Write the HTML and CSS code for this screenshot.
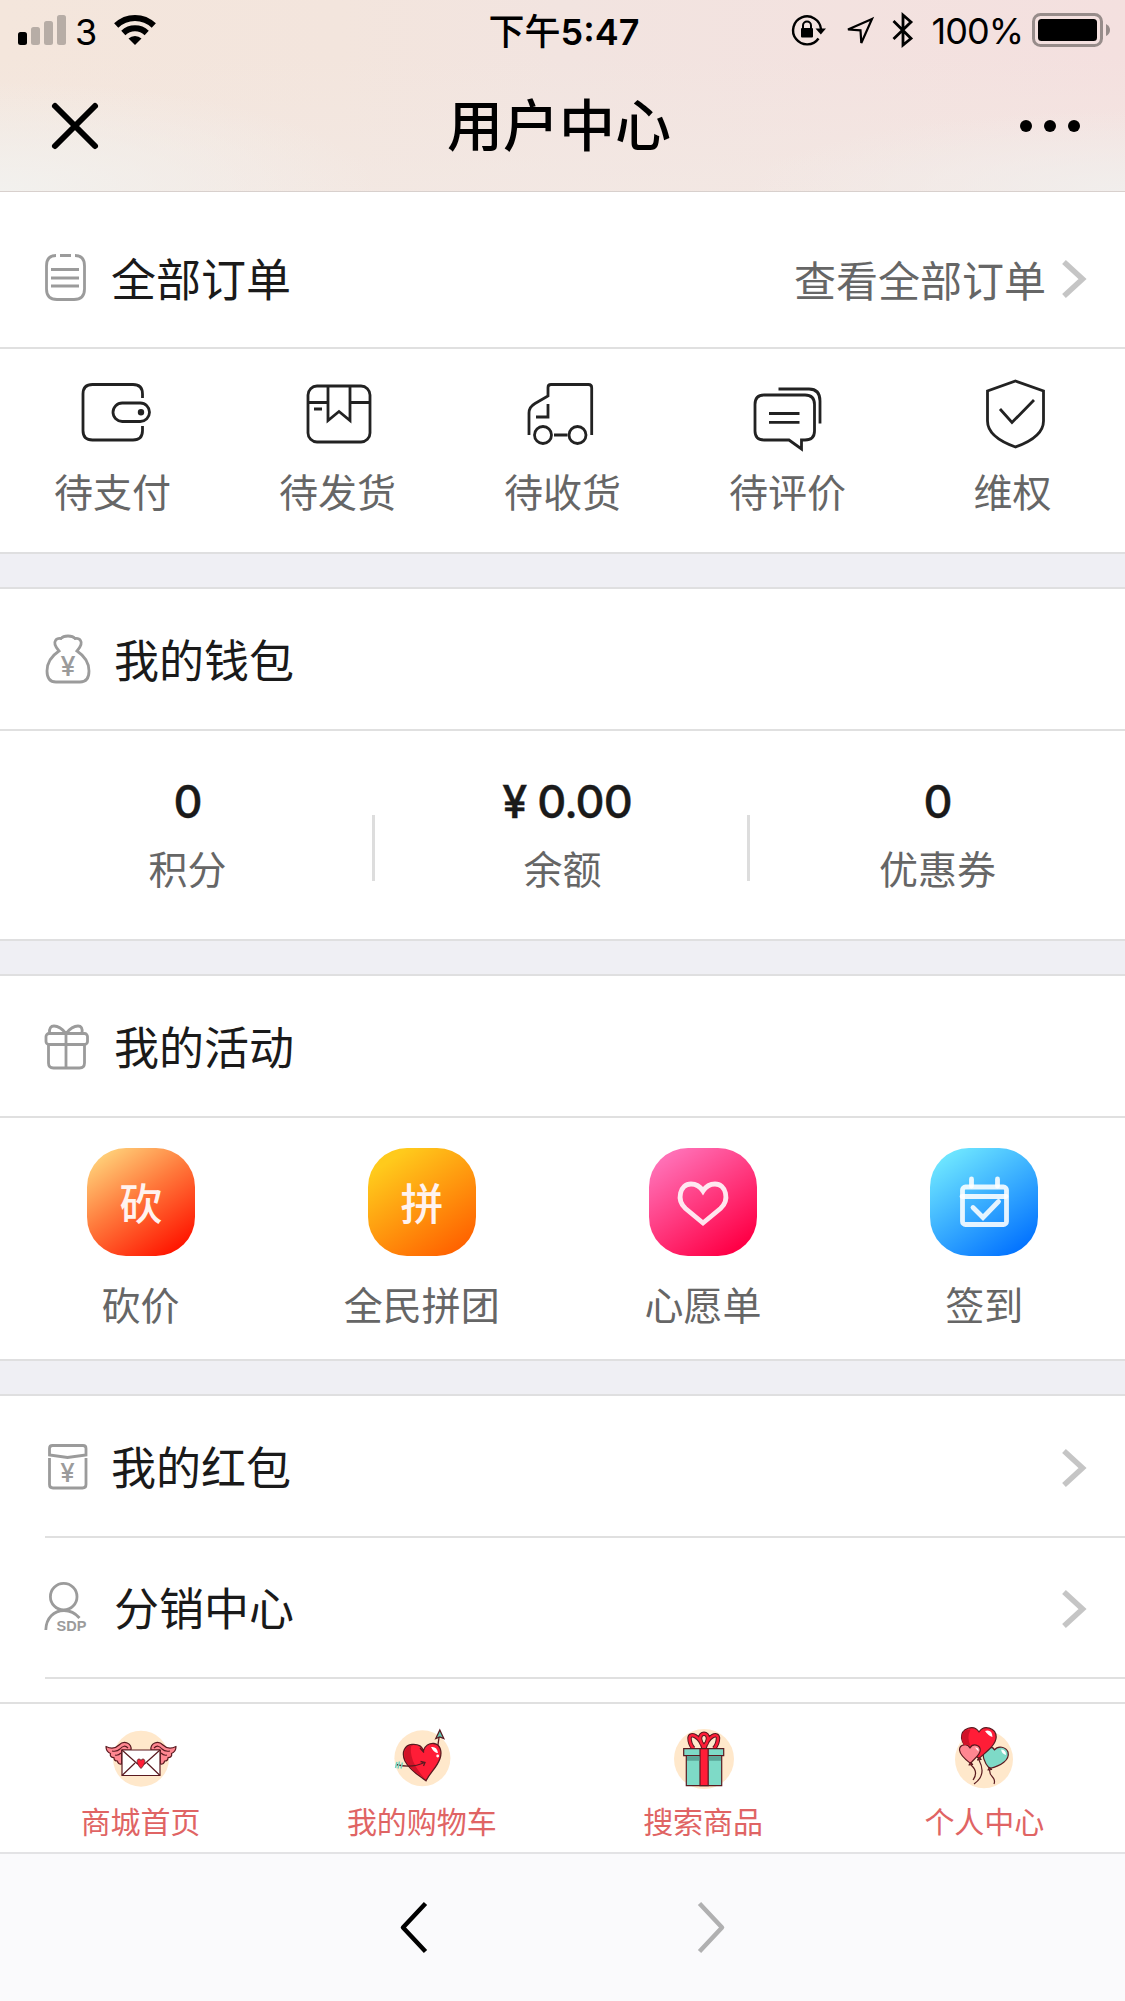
FILE: index.html
```html
<!DOCTYPE html>
<html lang="zh-CN">
<head>
    <meta charset="UTF-8">
    <meta name="viewport" content="width=device-width, initial-scale=1.0">
    <title>用户中心</title>
    <link rel="stylesheet" href="styles.css">
</head>
<body>
<div class="screen">

    <header class="top">
        <div class="status">
            <div class="status-left">
                <svg width="48" height="30" viewBox="0 0 48 30">
                    <rect x="0" y="17" width="9" height="13" rx="2.5"/>
                    <g fill="#b7ada6">
                        <rect x="13" y="12" width="9" height="18" rx="2.5"/>
                        <rect x="26" y="6" width="9" height="24" rx="2.5"/>
                        <rect x="39" y="0" width="9" height="30" rx="2.5"/>
                    </g>
                </svg>
                <span class="carrier">3</span>
                <svg class="wifi" width="42" height="30" viewBox="0 0 42 30">
                    <g fill="none" stroke="#000" stroke-width="6">
                        <path d="M2.2 10.5a27 27 0 0 1 37.6 0"/>
                        <path d="M9.3 18a17 17 0 0 1 23.4 0"/>
                    </g>
                    <path d="M21 30l-6.5-6.5a9.5 9.5 0 0 1 13 0z"/>
                </svg>
            </div>
            <span class="time">下午<b>5:47</b></span>
            <div class="status-right">
                <svg width="34" height="32" viewBox="0 0 34 32">
                    <path d="M26.5 24.5A14 14 0 1 1 29 15" fill="none" stroke="#000" stroke-width="2.4"/>
                    <path d="M23.5 14.500h10.500l-5.200 6z"/>
                    <rect x="9" y="14" width="12" height="9.500" rx="1"/>
                    <path d="M11 15v-3.500a4 4 0 0 1 8 0V15" fill="none" stroke="#000" stroke-width="2"/>
                </svg>
                <svg class="locate" width="30" height="31" viewBox="0 0 30 31">
                    <path d="M27 3L3 13.500l12.500.8.8 12.700z" fill="none" stroke="#000" stroke-width="2.200"/>
                </svg>
                <svg class="bluetooth" width="22" height="36" viewBox="0 0 22 36">
                    <path d="M1.500 9L19 26.500 11 33V3l8 7L1.500 27" fill="none" stroke="#000" stroke-width="2.800"/>
                </svg>
                <span class="percent">100%</span>
                <svg width="78" height="34" viewBox="0 0 78 34">
                    <rect x="1.500" y="1.500" width="68" height="31" rx="7" fill="none" stroke="#978c8a" stroke-width="3"/>
                    <rect x="6" y="6" width="59" height="22" rx="3.500"/>
                    <path d="M74 11q4 2 4 6t-4 6z" fill="#978c8a"/>
                </svg>
            </div>
        </div>
        <div class="navbar">
            <svg width="46" height="46" viewBox="0 0 46 46">
                <path d="M3 3l40 40M43 3L3 43" stroke="#000" stroke-width="6" stroke-linecap="round"/>
            </svg>
            <h1>用户中心</h1>
            <svg width="60" height="12" viewBox="0 0 60 12">
                <circle cx="6" cy="6" r="6"/><circle cx="30" cy="6" r="6"/><circle cx="54" cy="6" r="6"/>
            </svg>
        </div>
    </header>

    <main class="content">
        <section class="card first">
            <div class="row orders-head">
                <svg class="row-icon" viewBox="0 0 48 50">
                    <path d="M11 .5C5 .5 1.500 4 1.500 11v23c0 7 3.500 10.500 10.500 10.500h17c7 0 10.500-3.500 10.500-10.500V11C39.500 4 36 .5 30 .5M15 .5h11"/>
                    <path d="M6 14.500h28M6 23h28M6 31h28"/>
                </svg>
                <span class="label">全部订单</span>
                <span class="more">查看全部订单</span>
                <svg class="arrow" viewBox="0 0 24 38"><path d="M2 2l18.500 17L2 36"/></svg>
            </div>
            <div class="orders">
                <div class="order">
                    <svg viewBox="0 0 75 75">
                        <path d="M67.500 23v-4q0-9.500-9.500-9.500H17.500Q8 9.500 8 19v36.500q0 9.500 9.500 9.500H58q9.500 0 9.500-9.500V51"/>
                        <rect x="38" y="28" width="36.500" height="18.500" rx="9.200"/>
                        <circle cx="66" cy="37.300" r="1.800" fill="#222"/>
                    </svg>
                    <span>待支付</span>
                </div>
                <div class="order">
                    <svg viewBox="0 0 75 75">
                        <rect x="8" y="11" width="62" height="56" rx="9"/>
                        <path d="M8 27.500h20M50 27.500h20M14 34h8M28 11v34.500l11-9 11 9V11"/>
                    </svg>
                    <span>待发货</span>
                </div>
                <div class="order">
                    <svg viewBox="0 0 75 75">
                        <path d="M4 60V38q0-6 6-9.500L23 21V12.500Q23 9.500 26 9.500h37.500q3.200 0 3.200 3.200V60M23 29v13H11M29 60h13.500"/>
                        <circle cx="18" cy="60" r="8.500"/>
                        <circle cx="52.500" cy="60" r="8.500"/>
                    </svg>
                    <span>待收货</span>
                </div>
                <div class="order">
                    <svg viewBox="0 0 75 75">
                        <path d="M14 20h41q9.500 0 9.500 9.500V56q0 9-9.500 9H51.500v9L39 65H14q-9 0-9-9V29.500Q5 20 14 20z"/>
                        <path d="M28.500 14H59q11 0 11 12v22.500M19 38.500h30.500M19 47.300h30.500"/>
                    </svg>
                    <span>待评价</span>
                </div>
                <div class="order">
                    <svg viewBox="0 0 75 75">
                        <path d="M40.500 6L68.500 16v30q0 16-28 26-28-10-28-26V16z"/>
                        <path d="M25 34l12 13.500L59 25"/>
                    </svg>
                    <span>维权</span>
                </div>
            </div>
        </section>

        <section class="card">
            <div class="row">
                <svg class="row-icon" viewBox="0 0 48 50">
                    <path d="M14 17q-6-7-3.500-10.500Q12 4 16 4.500q2-2.500 7-2.500t7 2.500q4-.5 5.500 2Q38 10 32 17q12 8 12 20 0 11-9 11H11Q2 48 2 37q0-12 12-20z"/>
                    <text x="23" y="42" font-size="27">¥</text>
                </svg>
                <span class="label wide">我的钱包</span>
            </div>
            <div class="stats">
                <div class="stat"><b>0</b><span>积分</span></div>
                <div class="stat"><b class="money">¥ 0.00</b><span>余额</span></div>
                <div class="stat"><b>0</b><span>优惠券</span></div>
            </div>
        </section>

        <section class="card">
            <div class="row">
                <svg class="row-icon" viewBox="0 0 48 50">
                    <rect x="1" y="12.500" width="41.500" height="11" rx="3"/>
                    <path d="M3.500 23.500V42q0 5 5 5h26q5 0 5-5V23.500M21 12.500V47"/>
                    <path d="M21 12.500Q15 5 9 5 4 5 4.500 12M21 12.500Q27 5 33 5q5 0 4 7"/>
                </svg>
                <span class="label wide">我的活动</span>
            </div>
            <div class="games">
                <div class="game">
                    <div class="tile cut">砍</div>
                    <span>砍价</span>
                </div>
                <div class="game">
                    <div class="tile group">拼</div>
                    <span>全民拼团</span>
                </div>
                <div class="game">
                    <div class="tile wish">
                        <svg viewBox="0 0 108 108"><path d="M54 75L36.500 60.500C27 52 31 36 42 36q7.500 0 12 7 4.500-7 12-7c11 0 15 16 5.500 24.500z"/></svg>
                    </div>
                    <span>心愿单</span>
                </div>
                <div class="game">
                    <div class="tile sign">
                        <svg viewBox="0 0 108 108">
                            <rect x="32.500" y="39" width="44" height="37.500" rx="3"/>
                            <path d="M32 48.500h44M41.500 38v-7M67.500 38v-7M43 59.500l10 10 15.500-16"/>
                        </svg>
                    </div>
                    <span>签到</span>
                </div>
            </div>
        </section>

        <section class="card list">
            <div class="row">
                <svg class="row-icon" viewBox="0 0 48 50">
                    <path d="M4.500 14V7.500q0-3 3-3h30.500q3 0 3 3V14L22.500 16.500zM4.500 17v26.500q0 3.500 3.500 3.500h29.500q3.500 0 3.500-3.500V17"/>
                    <text x="22.500" y="41" font-size="26">¥</text>
                </svg>
                <span class="label">我的红包</span>
                <svg class="arrow" viewBox="0 0 24 38"><path d="M2 2l18.500 17L2 36"/></svg>
            </div>
            <div class="row short">
                <svg class="row-icon" viewBox="0 0 48 50">
                    <circle cx="18.700" cy="13.700" r="13.300"/>
                    <path d="M.8 47C1 35 9 27.500 19 27.500q9 0 15.500 7.500"/>
                    <text class="sdp" x="26.500" y="47.500" font-size="14.500">SDP</text>
                </svg>
                <span class="label wide">分销中心</span>
                <svg class="arrow" viewBox="0 0 24 38"><path d="M2 2l18.500 17L2 36"/></svg>
            </div>
        </section>
    </main>

    <nav class="tabs">
        <a class="tab">
            <!-- winged envelope -->
            <svg viewBox="0 0 90 66">
                <circle cx="45" cy="36.700" r="28" fill="#ffe8cb"/>
                <g stroke="#5a1a20" stroke-width="1.200" stroke-linejoin="round">
                    <g id="wing" fill="#ff8791">
                        <path d="M35 28c1-7-7-10-12-5-3 3-8 4-13 1.500 0 4 2 6 4.500 7-1 2.500 1 4 3.500 4.200 0 2 1.500 3.300 3.500 3.300 0 2 2 3.500 4.200 3V28z"/>
                        <path d="M32 26q-4-4-8 1-3 3-8 2M25 31q-3 3-6 2" fill="none"/>
                    </g>
                    <use href="#wing" transform="matrix(-1 0 0 1 90 0)"/>
                    <rect x="26" y="28" width="38" height="25.500" fill="#fff"/>
                    <path d="M26 53.500L39 41M64 53.500L51 41M26 28l15 13.500q4 3 8 0L64 28" fill="none"/>
                    <path d="M45 46.500c-5-5-4.500-9.500-2-9.500q1.500 0 2 1.500.5-1.500 2-1.500c2.500 0 3 4.500-2 9.500z" fill="#ff1d37" stroke-width=".8"/>
                </g>
            </svg>
            <span>商城首页</span>
        </a>
        <a class="tab">
            <!-- heart with an arrow through it -->
            <svg viewBox="0 0 90 66">
                <circle cx="45.400" cy="36.300" r="28" fill="#ffe8cb"/>
                <g stroke="#5a1a20" stroke-width="1.300" fill="none">
                    <path d="M60.500 26l2-14"/>
                    <path d="M62.800 8l4 8.500-4-1.500-4 1.500z" fill="#5fc9b4"/>
                    <path d="M49 58.800C43 54 33 49 28 39c-4-9 0-16 7-16.500 6-.5 10 2 11.500 6C48 24 52 21 57 21.500c7 1 8 9 6 15-3 9-10 14-14 22.300z" fill="#ff1d37"/>
                </g>
                <path d="M48 57C42 52 33 48 28.700 38.500 25.500 30 29 24 34.500 23q-2 6 1.500 16 4 9 12 18z" fill="#d01328"/>
                <path d="M54 25q6-1 7 6-4 0-7-6z" fill="#fff"/>
                <circle cx="60.700" cy="34" r="1.400" fill="#fff"/>
                <path d="M19 42.500q16 4 28.500-2M43.500 39.500l4.500 1-1.500 3.500M43 26l4 4.500" stroke="#5a1a20" stroke-width="1.300" fill="none"/>
                <path d="M20 40l-1.500 6M22.500 39.500l-1.500 7M25.500 40.500l-1.500 6" stroke="#73d3c0" stroke-width="1.500"/>
            </svg>
            <span>我的购物车</span>
        </a>
        <a class="tab">
            <!-- gift box -->
            <svg viewBox="0 0 90 66">
                <circle cx="46" cy="37" r="30" fill="#ffe8cb"/>
                <g fill="none" stroke="#5a1a20" stroke-width="4.500">
                    <path d="M45.500 26C42 14 32 10 31.500 16q0 6 4 10.500M46.500 26C50 14 59.500 10 60 16q0 6-4 10.500M42 17c0-7 8-7 8 0q-.5 4-4 8-3.500-4-4-8z"/>
                    <path d="M45.500 26C42 14 32 10 31.500 16q0 6 4 10.500M46.500 26C50 14 59.500 10 60 16q0 6-4 10.500M42 17c0-7 8-7 8 0q-.5 4-4 8-3.500-4-4-8z" stroke="#ff1d37" stroke-width="2.500"/>
                </g>
                <g stroke="#5a1a20" stroke-width="1.200">
                    <path d="M28.300 33.500h35.400v30.200H28.300z" fill="#7edac7"/>
                    <path d="M25.700 26.700h40v7h-40z" fill="#7edac7"/>
                    <path d="M42 26.700h8.200v37H42z" fill="#ff1d37"/>
                </g>
                <path d="M29 34.300h12.400v4.500H29zM50.800 34.300H63v4.500H50.800z" fill="#5aa698"/>
            </svg>
            <span>搜索商品</span>
        </a>
        <a class="tab">
            <!-- heart balloons -->
            <svg viewBox="0 0 90 66">
                <circle cx="45" cy="37.300" r="29" fill="#ffe8cb"/>
                <g stroke="#5a1a20" stroke-width="1.200" fill="none" stroke-linejoin="round">
                    <path d="M32 43q8 7 2 15M40 38q8 15-5 24M50.500 48q0 4 3 7 3 3 1.500 7"/>
                    <path d="M50.500 46.500C45 41 43 33 45 29c2-5 9-5 10.500-1C59 23 67 25 69 30c2 8-7 14-18.500 16.500z" fill="#7edac7"/>
                    <path d="M40 36.500C33 31 24 25 22.500 16 22 6 35 2 40 10c5-8 17-4 17.200 5-.2 8-10.200 15-17.200 21.500z" fill="#ff1d37"/>
                    <path d="M31.600 41.500C27 38 21 33.500 20.500 28c0-6 8-7 10.500-2 2.500-5 10-3.500 10.300 2 0 5-6.300 8.500-9.700 13.500z" fill="#ff8791"/>
                    <path d="M30 43l1.600-2.500 2 2zM38.500 38l1.600-2.500 2 2zM49 48l1.600-2.500 2 2z" fill="#ff1d37"/>
                </g>
                <path d="M31.500 7.500q-4 8 0 16.500-2-2-6.500-.8Q19.500 12 27 8z" fill="#d01328"/>
                <path d="M46 9q7-2 7.500 6-4-1-7.500-6z" fill="#fff"/>
                <path d="M62 27.500q5 0 5 5.500-4-1-5-5.500zM36 25.500q4 0 3.500 4z" fill="#fff"/>
            </svg>
            <span>个人中心</span>
        </a>
    </nav>

    <footer class="browser-bar">
        <svg width="28" height="52" viewBox="0 0 28 52"><path d="M25.500 1.500L3 25.500l22.500 24" stroke="#000"/></svg>
        <svg width="28" height="52" viewBox="0 0 28 52"><path d="M2.500 1.500L25 25.500 2.500 49.500" stroke="#b0b0b1"/></svg>
    </footer>

</div>
</body>
</html>
```

FILE: styles.css
```css
*{
    box-sizing: border-box;
}
body{
    margin: 0;
    background-color: #fff;
    font-family: Inter, "Noto Sans CJK SC", sans-serif;
    color: #1a1a1a;
}
svg{
    display: block;
    flex: none;
    overflow: visible;
}
.screen{
    display: flex;
    flex-direction: column;
    height: 2001px;
    overflow: hidden;
}

/* status bar + title */
.top{
    height: 192px;
    flex: none;
    color: #000;
    border-bottom: 1px solid #d8d0cd;
    background:
        radial-gradient(ellipse 380px 110px at 0 100%, #f2f1ee, rgba(242, 241, 238, 0)),
        radial-gradient(ellipse 380px 80px at 100% 100%, #f1eeec, rgba(241, 238, 236, 0)),
        linear-gradient(to bottom, rgba(243, 233, 228, 0) 30%, rgba(243, 233, 228, 0.7)),
        linear-gradient(to right, #f4e6dc, #f3e5dd 30%, #f2e4e0 50%, #f4e0df);
}
.status{
    display: flex;
    justify-content: space-between;
    height: 60px;
    padding: 0 15px 0 18px;
    font-size: 36px;
    line-height: 60px;
}
.status-left, .status-right{
    display: flex;
    flex: 1;
    align-items: center;
}
.status-right{
    justify-content: flex-end;
}
.carrier{
    margin: 3px 0 0 9px;
}
.wifi{
    margin-left: 17px;
}
.time{
    padding-top: 2px;
    font-weight: 500;
}
.time b{
    font-weight: 600;
}
.locate{
    margin: 2px 17px 0 19px;
}
.percent{
    margin: 2px 9px 0 18px;
    letter-spacing: -1px;
}
.navbar{
    display: flex;
    justify-content: space-between;
    align-items: center;
    height: 132px;
    padding: 0 45px 0 52px;
}
h1{
    margin: 0;
    font-size: 56px;
    font-weight: 500;
    line-height: 80px;
}

/* cards */
.content{
    flex: 1;
    overflow: hidden;
    background-color: #efeff4;
}
.card{
    background-color: #fff;
    border-top: 2px solid #dfdfe0;
    border-bottom: 2px solid #dfdfe0;
    margin-bottom: 33px;
}
.card.first{
    border-top: 0;
}
.row{
    display: flex;
    align-items: center;
    height: 142px;
    padding: 0 39px 0 45px;
    border-bottom: 2px solid #e0e0e0;
}
.orders-head{
    height: 157px;
    padding-top: 21px;
}
.row-icon{
    width: 48px;
    height: 50px;
    fill: none;
    stroke: #9b9b9b;
    stroke-width: 2.8;
}
.row-icon text{
    fill: #9b9b9b;
    stroke: none;
    font-weight: 500;
    text-anchor: middle;
}
.row-icon .sdp{
    font-family: "Liberation Sans", sans-serif;
    font-weight: 600;
}
.label{
    flex: 1;
    margin-left: 18px;
    padding-top: 5px;
    font-size: 45px;
    line-height: 60px;
}
.orders-head .label{
    padding-top: 2px;
}
.label.wide{
    margin-left: 21px;
}
.more{
    margin-right: 16px;
    padding-top: 3px;
    font-size: 42px;
    line-height: 60px;
    color: #666;
}
.arrow{
    width: 24px;
    height: 38px;
    margin-top: 3px;
    fill: none;
    stroke: #c5c5c5;
    stroke-width: 5.5;
}
.orders-head .arrow{
    margin-top: -3px;
}

.orders{
    display: flex;
    height: 203px;
    padding-top: 26px;
}
.order, .stat, .game, .tab{
    display: flex;
    flex: 1;
    flex-direction: column;
    align-items: center;
}
.order svg{
    width: 75px;
    height: 75px;
    fill: none;
    stroke: #222;
    stroke-width: 2.8;
}
.order span, .stat span, .game span{
    font-size: 39px;
    line-height: 50px;
    color: #666;
}
.order span{
    margin-top: 18px;
}

.stats{
    display: flex;
    height: 208px;
    padding-top: 46px;
}
.stat{
    position: relative;
}
.stat + .stat::before{
    content: "";
    position: absolute;
    left: -3px;
    top: 38px;
    width: 3px;
    height: 66px;
    background-color: #ddd;
}
.stat b{
    font-size: 45px;
    font-weight: 500;
    line-height: 50px;
    letter-spacing: -1px;
    -webkit-text-stroke: 0.4px #1a1a1a;
}
.stat .money{
    padding-left: 9px;
}
.stat span{
    margin-top: 18px;
}

.games{
    display: flex;
    height: 241px;
    padding-top: 30px;
}
.tile{
    width: 108px;
    height: 108px;
    border-radius: 39px;
    color: #fff3ef;
    font-size: 43px;
    font-weight: 500;
    line-height: 112px;
    text-align: center;
}
.tile svg{
    width: 108px;
    height: 108px;
    fill: none;
    stroke: #fff;
    stroke-opacity: .88;
    stroke-width: 4.8;
    stroke-linecap: round;
}
.cut{
    background: linear-gradient(145deg, #ffd27a 8%, #ff7a3c 45%, #ff1500 90%);
}
.group{
    background: linear-gradient(145deg, #ffca1c 15%, #ff6200 90%);
}
.wish{
    background: linear-gradient(145deg, #ff6fb5 12%, #ff0046 88%);
}
.sign{
    background: linear-gradient(145deg, #6ee6ff 10%, #0070ff 92%);
}
.game span{
    margin-top: 25px;
}

.list{
    height: 400px;
    margin-bottom: 0;
}
.list .row{
    margin-left: 45px;
    padding-left: 0;
}
.list .short{
    height: 141px;
}

/* bottom menu */
.tabs{
    display: flex;
    flex: none;
    height: 150px;
    padding-top: 18px;
    background-color: #fff;
    border-top: 2px solid #e0e0e0;
}
.tab svg{
    width: 90px;
    height: 66px;
}
.tab span{
    margin-top: 14px;
    font-size: 30px;
    line-height: 40px;
    color: #e06464;
}

.browser-bar{
    display: flex;
    flex: none;
    justify-content: center;
    gap: 269px;
    height: 149px;
    padding-top: 48px;
    background-color: #fafafc;
    border-top: 2px solid #e3e3e5;
}
.browser-bar svg{
    fill: none;
    stroke-width: 4.5;
    stroke-linejoin: round;
}
```
